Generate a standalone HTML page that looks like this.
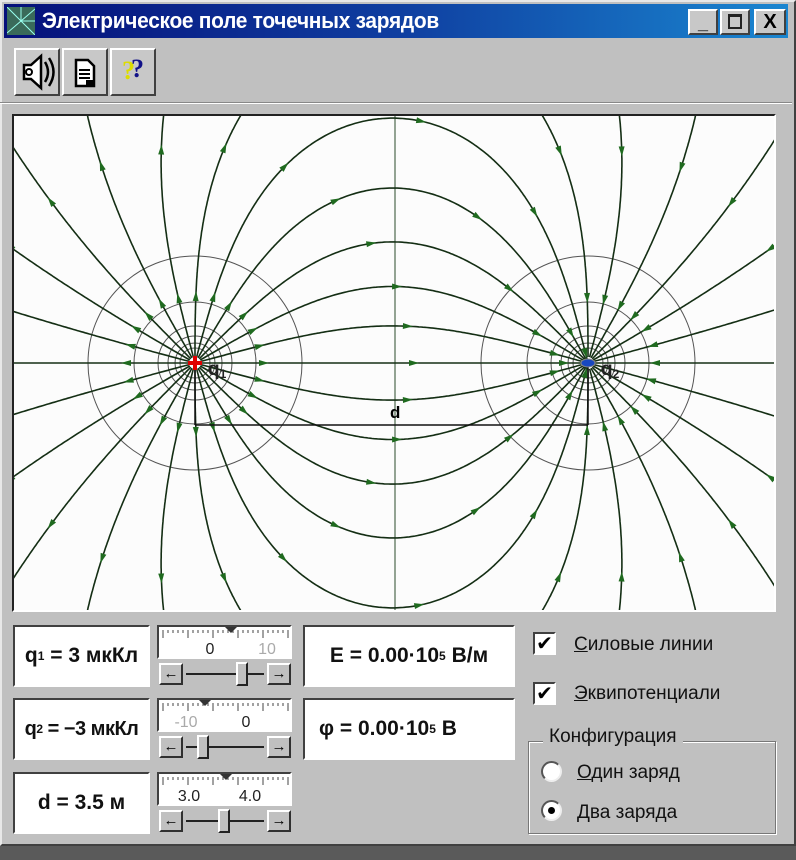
<!DOCTYPE html>
<html><head><meta charset="utf-8">
<style>
*{margin:0;padding:0;box-sizing:border-box}
body{width:796px;height:860px;background:#5a5a5a;font-family:"Liberation Sans",sans-serif;position:relative;overflow:hidden}
.win{position:absolute;left:0;top:0;width:796px;height:846px;background:#c0c0c0;border:2px solid #e8e8e8;border-right-color:#404040;border-bottom-color:#404040}
.abs{position:absolute}
.title{left:4px;top:4px;width:784px;height:34px;background:linear-gradient(90deg,#06107a,#0f3ea0 50%,#1a86d0)}
.title span{position:absolute;left:38px;top:4px;color:#fff;font-size:22px;font-weight:bold;letter-spacing:-0.3px;transform:scaleX(0.95);transform-origin:left}
.tb{border:2px solid;border-color:#fff #404040 #404040 #fff;background:#c8c8c8}
.sunk{border:2px solid;border-color:#404040 #fff #fff #404040;background:#fff}
.val{font-weight:bold;font-size:21px;color:#111;display:flex;align-items:center;justify-content:center}
.sbtn{width:24px;height:22px;border:2px solid;border-color:#fff #303030 #303030 #fff;background:#c0c0c0;font-size:15px;font-weight:bold;text-align:center;line-height:17px}
.lbl{font-size:19px;color:#111}
</style></head><body>
<div class="win"></div>
<div class="abs title"><svg class="abs" style="left:3px;top:3px" width="28" height="28"><rect width="28" height="28" fill="#3a6a5a"/><g stroke="#9fe" stroke-width="1"><line x1="14" y1="14" x2="0" y2="0"/><line x1="14" y1="14" x2="28" y2="2"/><line x1="14" y1="14" x2="0" y2="26"/><line x1="14" y1="14" x2="28" y2="28"/><line x1="14" y1="14" x2="14" y2="0"/><line x1="14" y1="14" x2="28" y2="14"/></g></svg><span>Электрическое поле точечных зарядов</span>
<div class="abs tb" style="left:684px;top:5px;width:30px;height:26px;font-weight:bold;font-size:18px;text-align:center;line-height:24px">_</div>
<div class="abs tb" style="left:716px;top:5px;width:30px;height:26px"><div style="position:absolute;left:6px;top:3px;width:14px;height:15px;border:2px solid #222;border-top-width:3px"></div></div>
<div class="abs tb" style="left:750px;top:5px;width:32px;height:26px;font-weight:bold;font-size:20px;text-align:center;line-height:22px">X</div>
</div>
<div class="abs tb" style="left:14px;top:48px;width:46px;height:48px"><svg width="42" height="44"><path d="M8 15h7l10-9v32l-10-9H8z" fill="#fff" stroke="#000" stroke-width="2.5"/><circle cx="13" cy="22" r="3" fill="none" stroke="#000" stroke-width="2"/><path d="M29 12q6 10 0 20M33 8q9 14 0 28" fill="none" stroke="#000" stroke-width="2.5"/></svg></div>
<div class="abs tb" style="left:62px;top:48px;width:46px;height:48px"><svg width="42" height="44"><path d="M12 10h12l6 6v20H12z" fill="#fff" stroke="#000" stroke-width="2.5"/><path d="M15 20h11M15 24h11M15 28h11" stroke="#000" stroke-width="2"/><rect x="22" y="30" width="9" height="7" fill="#000"/></svg></div>
<div class="abs tb" style="left:110px;top:48px;width:46px;height:48px"><span style="position:absolute;left:10px;top:6px;font:bold 26px 'Liberation Serif',serif;color:#dd0">?</span><span style="position:absolute;left:19px;top:4px;font:bold 26px 'Liberation Serif',serif;color:#118">?</span></div>
<div class="abs" style="left:0;top:102px;width:792px;height:2px;background:#fff;border-top:1px solid #888"></div>
<div class="abs" style="left:12px;top:114px;width:764px;height:498px;border:2px solid;border-color:#222 #fff #fff #222;background:#fcfcfc">
<svg id="plot" width="760" height="494" style="position:absolute;left:0;top:0"></svg></div>

<div class="abs sunk val" style="left:13px;top:625px;width:137px;height:62px">q<sub style="font-size:12px">1</sub>&nbsp;= 3 мкКл</div>
<div class="abs sunk val" style="left:13px;top:698px;width:137px;height:62px;font-size:20px;letter-spacing:-0.5px">q<sub style="font-size:12px">2</sub>&nbsp;= −3 мкКл</div>
<div class="abs sunk val" style="left:13px;top:772px;width:137px;height:62px">d = 3.5 м</div>
<div class="abs sunk val" style="left:303px;top:625px;width:212px;height:62px">E = 0.00·10<sup style="font-size:12px">5</sup>&nbsp;В/м</div>
<div class="abs sunk val" style="left:303px;top:698px;width:212px;height:62px;justify-content:flex-start;padding-left:14px">φ = 0.00·10<sup style="font-size:12px">5</sup>&nbsp;В</div>

<div id="sl"></div>

<div class="abs sunk" style="left:533px;top:632px;width:23px;height:23px;font:bold 20px 'DejaVu Sans';line-height:18px;text-align:center">✔</div>
<div class="abs lbl" style="left:574px;top:634px"><u>С</u>иловые линии</div>
<div class="abs sunk" style="left:533px;top:682px;width:23px;height:23px;font:bold 20px 'DejaVu Sans';line-height:18px;text-align:center">✔</div>
<div class="abs lbl" style="left:574px;top:683px"><u>Э</u>квипотенциали</div>
<div class="abs" style="left:528px;top:741px;width:248px;height:93px;border:1px solid #777;box-shadow:1px 1px 0 #fff,inset 1px 1px 0 #fff"></div>
<div class="abs lbl" style="left:543px;top:726px;background:#c0c0c0;padding:0 6px">Конфигурация</div>
<div class="abs" style="left:541px;top:761px;width:21px;height:21px;border-radius:50%;background:#fff;border:2px solid;border-color:#555 #eee #eee #555"></div>
<div class="abs lbl" style="left:577px;top:762px"><u>О</u>дин заряд</div>
<div class="abs" style="left:541px;top:800px;width:21px;height:21px;border-radius:50%;background:#fff;border:2px solid;border-color:#555 #eee #eee #555"><div style="position:absolute;left:5px;top:5px;width:7px;height:7px;border-radius:50%;background:#000"></div></div>
<div class="abs lbl" style="left:577px;top:802px"><u>Д</u>ва заряда</div>

<script>
var rows=[[625,'0','10',208,265,229,242],[698,'-10','0',184,244,203,203],[772,'3.0','4.0',187,248,224,224]];
var h='';
rows.forEach(function(r){var y=r[0];
h+='<div class="abs sunk" style="left:157px;top:'+y+'px;width:135px;height:34px"><svg width="131" height="30" style="position:absolute;left:0;top:0">';
for(var i=0;i<26;i++){var x=4+i*5;var big=(i%5==0);h+='<line x1="'+x+'" y1="3" x2="'+x+'" y2="'+(big?11:6)+'" stroke="#444"/>';}
h+='<path d="M'+(r[5]-157-6)+' 0l6 6 6-6z" fill="#333"/>';
h+='<text x="'+(r[3]-157)+'" y="27" font-size="16" font-family="Liberation Sans" fill="'+(r[1]=='-10'?'#aaa':'#222')+'" text-anchor="middle">'+r[1]+'</text><text x="'+(r[4]-157)+'" y="27" font-size="16" font-family="Liberation Sans" fill="'+(r[2]=='10'?'#aaa':'#222')+'" text-anchor="middle">'+r[2]+'</text></svg></div>';
h+='<div class="abs sbtn" style="left:159px;top:'+(y+38)+'px">←</div><div class="abs sbtn" style="left:267px;top:'+(y+38)+'px">→</div>';
h+='<div class="abs" style="left:186px;top:'+(y+48)+'px;width:78px;height:2px;background:#222"></div>';
h+='<div class="abs" style="left:'+(r[6]-6)+'px;top:'+(y+37)+'px;width:12px;height:24px;border:2px solid;border-color:#fff #222 #222 #fff;background:#c0c0c0"></div>';
});
document.getElementById('sl').innerHTML=h;

var ox=14,oy=116,W=760,H=494;
var q1={x:195-ox,y:363-oy,q:1},q2={x:588-ox,y:363-oy,q:-1};
var s='';
[15,20,27,37,61,107].forEach(function(r){
 s+='<circle cx="'+q1.x+'" cy="'+q1.y+'" r="'+r+'" fill="none" stroke="#555" stroke-width="1"/>';
 s+='<circle cx="'+q2.x+'" cy="'+q2.y+'" r="'+r+'" fill="none" stroke="#555" stroke-width="1"/>';
});
s+='<line x1="'+(395-ox)+'" y1="0" x2="'+(395-ox)+'" y2="'+H+'" stroke="#2a4a2a" stroke-width="1"/>';
function E(x,y){var ex=0,ey=0;[q1,q2].forEach(function(c){var dx=x-c.x,dy=y-c.y,r2=dx*dx+dy*dy,r=Math.sqrt(r2);ex+=c.q*dx/(r2*r);ey+=c.q*dy/(r2*r);});return[ex,ey];}
function trace(c,ang,dir,other){
 var x=c.x+6*Math.cos(ang),y=c.y+6*Math.sin(ang),pts=[[x,y]],hit=false;
 for(var i=0;i<4000;i++){var e=E(x,y),m=Math.hypot(e[0],e[1]);x+=dir*2*e[0]/m;y+=dir*2*e[1]/m;pts.push([x,y]);
  if(x<-5||x>W+5||y<-5||y>H+5)break;
  if(Math.hypot(x-other.x,y-other.y)<5){hit=true;break;}}
 return{pts:pts,hit:hit};}
function draw(p,dir){var d='M'+p.map(function(a){return a[0].toFixed(1)+' '+a[1].toFixed(1)}).join('L');
 s+='<path d="'+d+'" fill="none" stroke="#142e14" stroke-width="1.6"/>';
 var acc=0,next=60;
 for(var i=1;i<p.length;i++){acc+=Math.hypot(p[i][0]-p[i-1][0],p[i][1]-p[i-1][1]);
  if(acc>next){next+=150;var a=Math.atan2(p[i][1]-p[i-1][1],p[i][0]-p[i-1][0]);if(dir<0)a+=Math.PI;
   var x=p[i][0],y=p[i][1];
   s+='<path d="M'+(x+6*Math.cos(a))+' '+(y+6*Math.sin(a))+'L'+(x+5*Math.cos(a+2.5))+' '+(y+5*Math.sin(a+2.5))+'L'+(x+5*Math.cos(a-2.5))+' '+(y+5*Math.sin(a-2.5))+'Z" fill="#1f6a1f"/>';}}}
for(var k=0;k<24;k++){var a=k*Math.PI/12;var t=trace(q1,a,1,q2);draw(t.pts,1);}
for(var k=0;k<24;k++){var a=k*Math.PI/12;var t=trace(q2,a,-1,q1);if(!t.hit)draw(t.pts,-1);}
s+='<line x1="'+q1.x+'" y1="'+(425-oy)+'" x2="'+q2.x+'" y2="'+(425-oy)+'" stroke="#111" stroke-width="1.5"/>';
s+='<line x1="'+q1.x+'" y1="'+q1.y+'" x2="'+q1.x+'" y2="'+(425-oy)+'" stroke="#111" stroke-width="1.5"/>';
s+='<line x1="'+q2.x+'" y1="'+q2.y+'" x2="'+q2.x+'" y2="'+(425-oy)+'" stroke="#111" stroke-width="1.5"/>';
s+='<text x="'+(395-ox-5)+'" y="'+(418-oy)+'" font-size="17" font-weight="bold" font-family="Liberation Sans">d</text>';
s+='<path d="M'+(q1.x-7)+' '+(q1.y-2)+'h5v-5h4v5h5v4h-5v5h-4v-5h-5z" fill="#e00000"/>';
s+='<ellipse cx="'+q2.x+'" cy="'+q2.y+'" rx="7" ry="4" fill="#1848c0" stroke="#888"/>';
s+='<text x="'+(q1.x+13)+'" y="'+(q1.y+12)+'" font-size="19" font-weight="bold" font-family="Liberation Sans" fill="#222">q<tspan font-size="12" dy="3">1</tspan></text>';
s+='<text x="'+(q2.x+13)+'" y="'+(q2.y+12)+'" font-size="19" font-weight="bold" font-family="Liberation Sans" fill="#222">q<tspan font-size="12" dy="3">2</tspan></text>';
document.getElementById('plot').innerHTML=s;
</script>
</body></html>
